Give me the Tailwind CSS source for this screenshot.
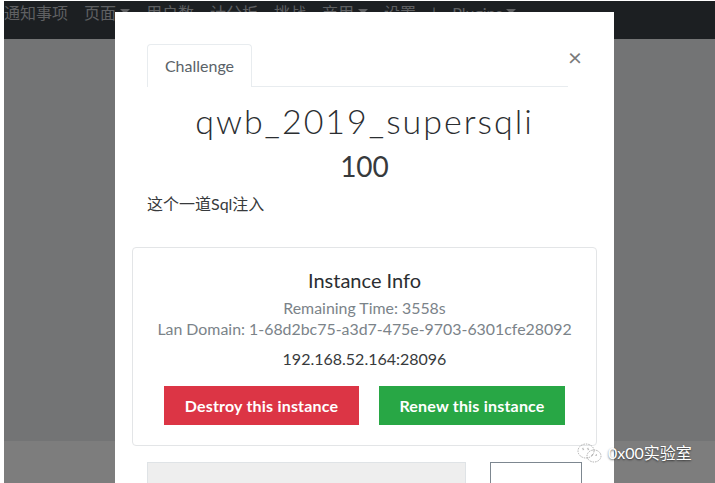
<!DOCTYPE html>
<html>
<head>
<meta charset="utf-8">
<script src="https://cdn.jsdelivr.net/npm/@tailwindcss/browser@4"></script>
</head>
<body class="w-[715px] h-[483px] overflow-hidden bg-white font-['Lato','Noto_Sans_CJK_SC',sans-serif]">
    <!-- page behind the backdrop -->
    <div class="ml-[4px] mt-[1px] h-[482px] flex flex-col">
        <nav class="h-[38px] bg-[#1c1f22] flex items-start gap-[16px] pt-[1px] text-[16px] leading-[22px] text-[#5f6062] whitespace-nowrap">
            <span>通知事项</span>
            <span>页面<i class="inline-block ml-[4px] mb-[7px] align-middle w-0 h-0 border-x-[5px] border-t-[5px] border-x-transparent border-t-[#5f6062]"></i></span>
            <span>用户数</span>
            <span>计分板</span>
            <span>挑战</span>
            <span>商用<i class="inline-block ml-[4px] mb-[7px] align-middle w-0 h-0 border-x-[5px] border-t-[5px] border-x-transparent border-t-[#5f6062]"></i></span>
            <span>设置</span>
            <span>|</span>
            <span>Plugins<i class="inline-block ml-[4px] mb-[7px] align-middle w-0 h-0 border-x-[5px] border-t-[5px] border-x-transparent border-t-[#5f6062]"></i></span>
        </nav>
        <div class="h-[402px] bg-[#737475]"></div>
        <div class="flex-1 bg-[#7d7d7d]"></div>
    </div>

    <!-- modal -->
    <main class="absolute left-[115px] top-[12px] w-[499px] h-[471px] bg-white px-[17px] text-[#373a3c]">
        <header class="relative pt-[32px] pl-[15px] pr-[29px]">
            <div class="border-b border-[#e8ecef] h-[43px]">
                <div class="w-[105px] h-[43px] bg-white border border-b-0 border-[#e8ecef] rounded-t-[4px] text-[16px] text-[#5a6268] flex items-center justify-center">Challenge</div>
            </div>
            <span class="absolute right-[15px] top-[30px] text-[24px] leading-[30px] text-[#7a7a7a]">×</span>
        </header>

        <h1 class="mt-[13px] text-center text-[34px] leading-[42px] font-light tracking-[2px] text-[#2b2e31]">qwb_2019_supersqli</h1>
        <h2 class="mt-[5px] text-center text-[28px] leading-[38px]">100</h2>
        <p class="mt-[7px] ml-[15px] text-[16px] leading-[24px]">这个一道Sql注入</p>

        <section class="mt-[31px] h-[199px] border border-[#e3e5e7] rounded-[4px] flex flex-col items-center pt-[20px]">
            <h3 class="text-[20px] leading-[24px] text-[#2b2e31]">Instance Info</h3>
            <p class="mt-[5px] text-[15.9px] leading-[21px] text-[#7b8389] text-center">Remaining Time: 3558s<br>Lan Domain: 1-68d2bc75-a3d7-475e-9703-6301cfe28092</p>
            <p class="mt-[8px] text-[16px] leading-[24px] text-[#373a3c]">192.168.52.164:28096</p>
            <div class="mt-[15px] flex gap-[20px] text-[16px] font-bold text-white tracking-[0.2px]">
                <div class="w-[195px] h-[39px] bg-[#dc3545] flex items-center justify-center">Destroy this instance</div>
                <div class="w-[186px] h-[39px] bg-[#28a745] flex items-center justify-center">Renew this instance</div>
            </div>
        </section>

        <div class="mt-[16px] ml-[15px] flex gap-[24px]">
            <div class="w-[319px] h-[40px] bg-[#eeeeee] border border-[#dfe3e6]"></div>
            <div class="w-[92px] h-[40px] border border-[#7d8790]"></div>
        </div>
    </main>

    <!-- watermark -->
    <div class="absolute left-[575px] top-[441px] flex items-center gap-[5px] text-[16px] text-white whitespace-nowrap [text-shadow:0_1px_2px_rgba(0,0,0,0.6)]">
        <svg class="w-[28px] h-[24px]" viewBox="0 0 28 24" fill="none" stroke="#9a9a9a" stroke-width="0.8" stroke-dasharray="1.5 1">
            <ellipse cx="11" cy="10" rx="8" ry="7"/>
            <ellipse cx="19" cy="15" rx="7" ry="6"/>
            <circle cx="8" cy="8" r="0.8"/>
            <circle cx="13" cy="8" r="0.8"/>
            <circle cx="17" cy="14" r="0.6"/>
            <circle cx="21" cy="14" r="0.6"/>
        </svg>
        <span>0x00实验室</span>
    </div>
</body>
</html>
